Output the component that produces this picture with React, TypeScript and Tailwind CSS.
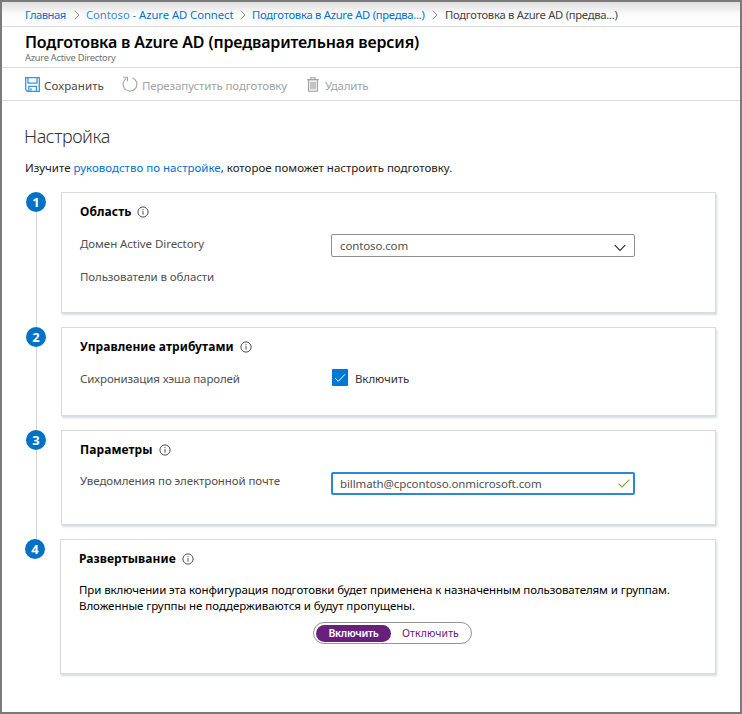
import type { ReactNode } from "react";

function Chevron() {
  return (
    <svg width="6" height="10" viewBox="0 0 6 10" fill="none" stroke="#8c8c8c" strokeWidth="1" className="shrink-0">
      <path d="M0.7 0.7 5 5 0.7 9.3" />
    </svg>
  );
}

function InfoIcon() {
  return (
    <svg width="12" height="12" viewBox="0 0 12 12" fill="none" stroke="#4c4c4c" strokeWidth="1" className="shrink-0">
      <circle cx="6" cy="6" r="5.1" />
      <path d="M6 5.1v3.6M6 3.1v1.1" />
    </svg>
  );
}

function SaveIcon() {
  return (
    <svg width="15" height="15" viewBox="0 0 15 15" fill="none" stroke="#3a94dd" strokeWidth="1.3" className="shrink-0">
      <path d="M0.7 0.7h13.6v13.6H2.4L0.7 12.6z" />
      <path d="M3 0.9v5.3h9V0.9M3.8 14V9.3h7.6V14M6 11.2v2.6" />
    </svg>
  );
}

function RestartIcon() {
  return (
    <svg width="16" height="16" viewBox="0 0 16 16" fill="none" stroke="#a3a3a3" strokeWidth="1.1" className="shrink-0">
      <path d="M10.3 1.7A6.9 6.9 0 1 1 4.2 2.4" />
      <path d="M1.2 1.3h4.3v4" />
    </svg>
  );
}

function TrashIcon() {
  return (
    <svg width="12" height="15" viewBox="0 0 12 15" fill="none" stroke="#a3a3a3" strokeWidth="1.1" className="shrink-0">
      <path d="M1.5 2.8v11.5h9V2.8" fill="#ececec" />
      <path d="M0.2 2.6h11.6M3.8 2.4V0.7h4.4v1.7" />
      <path d="M4 5v7M6 5v7M8 5v7" />
    </svg>
  );
}

type StepProps = {
  number: number;
  title: string;
  rowClass: string;
  cardClass: string;
  last?: boolean;
  children: ReactNode;
};

function Step({ number, title, rowClass, cardClass, last, children }: StepProps) {
  return (
    <section className={`flex ${rowClass}`}>
      <div className="flex w-5 shrink-0 flex-col items-center">
        <div className="flex h-5 w-5 items-center justify-center rounded-full bg-[#0072c6] text-[13px] leading-5 font-bold text-white">
          {number}
        </div>
        {!last && <div className="ml-px w-px flex-1 bg-[#d6d6d6]" />}
      </div>
      <div className={`ml-[15px] border border-[#d9dadb] bg-white pl-[18px] shadow-[1px_2px_2px_rgba(120,140,165,0.3)] ${cardClass}`}>
        <div className="mt-[11px] flex h-4 items-center gap-[6px]">
          <h2 className="text-[12px] leading-4 font-bold tracking-[0.08px] text-black">{title}</h2>
          <InfoIcon />
        </div>
        {children}
      </div>
    </section>
  );
}

export default function App() {
  return (
    <div className="h-[714px] w-[742px] overflow-hidden border-2 border-[#7a7a7a] bg-white font-['Noto_Sans','Open_Sans',sans-serif] text-[11.5px] leading-4 text-[#505050]">
      <nav className="flex h-[25px] items-center border-b border-[#dcdcdc] bg-linear-to-b from-[#dedede] via-[#fbfbfb] via-50% to-white pt-px pl-[23px] text-[11.25px] whitespace-nowrap text-[#0072d0]">
        <a className="w-[41px] tracking-[-0.5px]">Главная</a>
        <span className="ml-2 flex"><Chevron /></span>
        <a className="ml-[6px] w-[148px] tracking-[-0.04px]"><span className="text-[#2f8ae0]">Contoso -</span> Azure AD Connect</a>
        <span className="ml-[6px] flex"><Chevron /></span>
        <a className="ml-[6px] w-[174px] tracking-[-0.28px]">Подготовка в Azure AD (предва...)</a>
        <span className="ml-[6px] flex"><Chevron /></span>
        <span className="ml-[7px] tracking-[-0.28px] text-[#444]">Подготовка в Azure AD (предва...)</span>
      </nav>

      <header className="h-[41px] border-b border-[#dcdcdc] pt-[5px] pl-[23px]">
        <h1 className="text-[16px] leading-5 font-semibold tracking-[-0.15px] text-black">Подготовка в Azure AD (предварительная версия)</h1>
        <p className="text-[9.25px] leading-3 tracking-[-0.23px] text-[#6f6f6f]">Azure Active Directory</p>
      </header>

      <div className="flex h-[33px] items-center border-b border-[#dcdcdc] pl-[23px] text-[#a3a3a3]">
        <SaveIcon />
        <span className="mt-[3px] ml-1 w-[61px] tracking-[0.1px] text-[#4a4a4a]">Сохранить</span>
        <span className="ml-[17px] flex"><RestartIcon /></span>
        <span className="mt-[3px] ml-1 w-[146px] tracking-[-0.13px] whitespace-nowrap">Перезапустить подготовку</span>
        <span className="ml-[19px] flex"><TrashIcon /></span>
        <span className="mt-[3px] ml-[6px] tracking-[-0.2px]">Удалить</span>
      </div>

      <main className="pt-[23px] pl-6">
        <h1 className="-ml-[2px] text-[18px] leading-6 font-light tracking-[-0.4px] text-[#333]">Настройка</h1>
        <p className="-ml-px mt-3 mb-4 text-[#222]">
          Изучите <a className="text-[#0072d0]">руководство по настройке</a>, которое поможет настроить подготовку.
        </p>

        <Step number={1} title="Область" rowClass="h-[135px]" cardClass="h-[121px] w-[655px]">
          <div className="mt-[14px] flex h-[23px]">
            <span className="mt-[2px] w-[251px] tracking-[-0.06px]">Домен Active Directory</span>
            <div className="flex h-[23px] w-[304px] items-center justify-between rounded-[2px] border border-[#8f8f8f] pr-2 pl-2">
              <span className="tracking-[-0.13px]">contoso.com</span>
              <svg width="12" height="8" viewBox="0 0 12 8" fill="none" stroke="#333" strokeWidth="1.2" className="mt-[5px]">
                <path d="M0.6 0.8 6 6.4 11.4 0.8" />
              </svg>
            </div>
          </div>
          <p className="mt-3 tracking-[-0.11px]">Пользователи в области</p>
        </Step>

        <Step number={2} title="Управление атрибутами" rowClass="h-[103px]" cardClass="h-[89px] w-[655px]">
          <div className="mt-[14px] flex">
            <span className="mt-[2px] w-[252px] tracking-[-0.12px]">Сихронизация хэша паролей</span>
            <div className="flex h-[17px] w-4 items-center justify-center rounded-[1px] bg-[#0078d4]">
              <svg width="12" height="10" viewBox="0 0 12 10" fill="none" stroke="#fff" strokeWidth="1">
                <path d="M1 5 4.3 8.3 11 1.3" />
              </svg>
            </div>
            <span className="mt-[2px] ml-[7px] tracking-[-0.1px] text-[#333]">Включить</span>
          </div>
        </Step>

        <Step number={3} title="Параметры" rowClass="h-[109px]" cardClass="h-[95px] w-[655px]">
          <div className="mt-[14px] flex">
            <span className="mt-px w-[251px] tracking-[-0.1px]">Уведомления по электронной почте</span>
            <div className="flex h-[23px] w-[304px] items-center justify-between rounded-[2px] border-2 border-[#2b88d8] pr-[3px] pl-[7px]">
              <span className="tracking-[-0.11px]">billmath@cpcontoso.onmicrosoft.com</span>
              <svg width="12" height="9" viewBox="0 0 12 9" fill="none" stroke="#6bb72b" strokeWidth="1.2">
                <path d="M0.6 4.6 4 8 11.4 0.6" />
              </svg>
            </div>
          </div>
        </Step>

        <div className="-ml-px">
          <Step number={4} title="Развертывание" rowClass="h-[135px]" cardClass="h-[135px] w-[656px]" last>
            <p className="mt-[15px] tracking-[-0.095px] whitespace-nowrap text-black">
              При включении эта конфигурация подготовки будет применена к назначенным пользователям и группам.
            </p>
            <p className="tracking-[-0.055px] whitespace-nowrap text-black">
              Вложенные группы не поддерживаются и будут пропущены.
            </p>
            <div className="mt-2 ml-[234px] flex h-[22px] w-[159px] items-center rounded-full border border-[#949494] pl-[2px] text-[10.5px]">
              <span className="flex h-[17px] w-[75px] items-center justify-center rounded-full bg-[#68217a] font-semibold tracking-[-0.3px] text-white">Включить</span>
              <span className="ml-[11px] tracking-[0.08px] text-[#68217a]">Отключить</span>
            </div>
          </Step>
        </div>
      </main>
    </div>
  );
}
